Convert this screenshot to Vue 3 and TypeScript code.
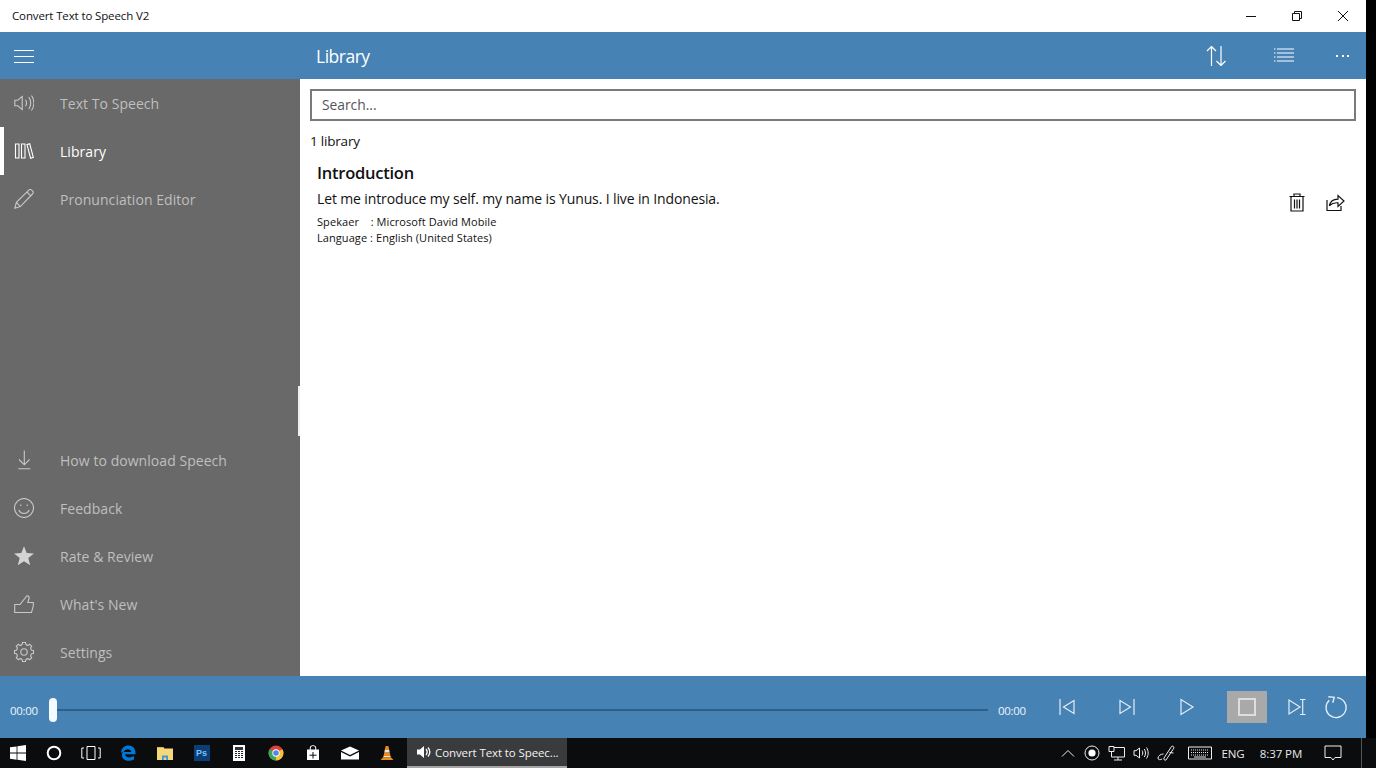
<script setup lang="ts">
interface NavItem { label: string; active?: boolean; icon: string; fill?: boolean }

function gearPath(): string {
  const pts: string[] = []
  const teeth = 8
  const cx = 10, cy = 10
  for (let i = 0; i < teeth; i++) {
    const a = (i / teeth) * Math.PI * 2
    const step = (Math.PI * 2) / teeth
    const seq: [number, number][] = [
      [7.4, a - step * 0.5],
      [7.9, a - step * 0.28],
      [9.6, a - step * 0.2],
      [9.6, a + step * 0.2],
      [7.9, a + step * 0.28],
    ]
    for (const [r, t] of seq) {
      pts.push(`${(cx + r * Math.cos(t)).toFixed(2)} ${(cy + r * Math.sin(t)).toFixed(2)}`)
    }
  }
  return 'M' + pts.join('L') + 'Z M13.2 10a3.2 3.2 0 1 1-6.4 0a3.2 3.2 0 1 1 6.4 0Z'
}

const topNav: NavItem[] = [
  { label: 'Text To Speech', icon: 'M.8 7.2h3L8.2 3.4v13.2L3.8 12.800H.8Z M11.500 6.800c1.300 2 1.300 4.400 0 6.400 M14.800 4c2.400 3.700 2.400 8.300 0 12 M17.500 2.500c3 4.500 3 10.500 0 15' },
  { label: 'Library', active: true, icon: 'M1.500 3h3.500v14H1.500Z M7.500 3H11v14H7.500Z M13 3.600l2.700-.8 3.600 13.600-2.700.8Z' },
  { label: 'Pronunciation Editor', icon: 'M.8 19.200l1.600-5.800L14.800 1.200c1-.9 2.500-.7 3.500.4 1 1 1.100 2.400.2 3.400L6.300 17.600Z M2.400 13.400l3.900 4.200 M13 3l4 4.100' },
]
const bottomNav: NavItem[] = [
  { label: 'How to download Speech', icon: 'M10.300 .5v14 M5 9.500l5.300 5.300 5.300-5.300 M4.300 18.800h12' },
  { label: 'Feedback', icon: 'M19.500 10a9.500 9.500 0 1 1-19 0a9.500 9.500 0 1 1 19 0Z M6.700 6.600v1.500 M13.300 6.600v1.500 M4.800 12c1 2.200 3 3.400 5.200 3.400s4.200-1.200 5.200-3.400' },
  { label: 'Rate & Review', fill: true, icon: 'M10 .3l2.700 6.800 7.200.4-5.600 4.600 1.900 7.100L10 15.200l-6.200 4 1.900-7.100L.1 7.500l7.200-.4Z' },
  { label: "What's New", icon: 'M.7 10.500h5.300L12.800 2c1.500-.4 2.600.5 2.300 2L13.800 8.500h5.500v3.300L17.500 18.500H.7Z' },
  { label: 'Settings', icon: gearPath() },
]
const taskSlots = ['win', 'cortana', 'view', 'edge', 'folder', 'ps', 'calc', 'chrome', 'store', 'mail', 'vlc']
</script>

<template>
  <div class="screen">
    <div class="window">
      <header class="titlebar">
        <span class="title">Convert Text to Speech V2</span>
        <div class="controls">
          <svg class="ctl" viewBox="0 0 12 12"><path d="M1 6.500h10" /></svg>
          <svg class="ctl" viewBox="0 0 12 12"><path d="M1.500 3.500h7v7h-7Z M3.500 3.500v-2h7v7h-2" /></svg>
          <svg class="ctl" viewBox="0 0 12 12"><path d="M1 1l10 10M11 1L1 11" /></svg>
        </div>
      </header>

      <div class="appbar">
        <div class="appbar-left">
          <svg class="burger" viewBox="0 0 20 14"><path d="M0 1.500h20M0 7.500h20M0 13.500h20" /></svg>
        </div>
        <h1 class="page-title">Library</h1>
        <div class="appbar-actions">
          <svg class="act" viewBox="0 0 20 20"><path d="M5.500 20V.5M1 5l4.500-4.500L10 5M15 0v19.500M10.500 15l4.500 4.500 4.500-4.500" /></svg>
          <svg class="act" viewBox="0 0 20 20"><path d="M0 3h1.500M3 3h17M0 7h1.500M3 7h17M0 11h1.500M3 11h17M0 15h1.500M3 15h17" /></svg>
          <div class="dots"><i></i><i></i><i></i></div>
        </div>
      </div>

      <div class="middle">
        <aside class="sidebar">
          <nav class="nav">
            <a v-for="n in topNav" :key="n.label" class="nav-row" :class="{ active: n.active }">
              <svg class="nav-icon" viewBox="0 0 20 20"><path :d="n.icon" :class="{ solid: n.fill }" /></svg>
              <span>{{ n.label }}</span>
            </a>
          </nav>
          <nav class="nav">
            <a v-for="n in bottomNav" :key="n.label" class="nav-row">
              <svg class="nav-icon" viewBox="0 0 20 20"><path :d="n.icon" :class="{ solid: n.fill }" /></svg>
              <span>{{ n.label }}</span>
            </a>
          </nav>
          <div class="grip"></div>
        </aside>

        <main class="content">
          <div class="search">Search...</div>
          <div class="count">1 library</div>
          <article class="entry">
            <div class="entry-text">
              <h2>Introduction</h2>
              <p class="body">Let me introduce my self. my name is Yunus. I live in Indonesia.</p>
              <p class="meta">Spekaer&nbsp;&nbsp;&nbsp; : Microsoft David Mobile</p>
              <p class="meta">Language : English (United States)</p>
            </div>
            <div class="entry-actions">
              <svg class="eact" viewBox="0 0 20 20"><path d="M2.500 4.500h15M7 4.500V2h6v2.500M4 4.500v14.500h12V4.500M7.500 7.500v9M10 7.500v9M12.500 7.500v9" /></svg>
              <svg class="eact" viewBox="0 0 20 20"><path d="M2 8v10.500h14V14M4.500 14c.6-4 3.500-6.800 8.500-6.800V3.500l6 5.500-6 5.500v-3.700c-3.500-.3-6.500.8-8.500 2.700Z" /></svg>
            </div>
          </article>
        </main>
      </div>

      <footer class="player">
        <span class="time first">00:00</span>
        <div class="slider"><div class="thumb"></div><div class="track"></div></div>
        <span class="time last">00:00</span>
        <div class="transport">
          <div class="tbtn"><svg viewBox="0 0 20 20"><path d="M3 2v16M17 3.500v13L6.500 10Z" /></svg></div>
          <div class="tbtn"><svg viewBox="0 0 20 20"><path d="M17 2v16M3 3.500v13L13.500 10Z" /></svg></div>
          <div class="tbtn"><svg viewBox="0 0 20 20"><path d="M4 2.500v15L16 10Z" /></svg></div>
          <div class="tbtn stop"><span class="sq"></span></div>
          <div class="tbtn loop"><svg viewBox="0 0 20 20"><path d="M2 3v14l11-7Z M13 2.500h5.500M13 17.500h5.500M15.700 2.500v15" /></svg></div>
          <div class="tbtn repeat"><svg viewBox="0 0 24 24"><path d="M13 2.600A10 10 0 1 1 5.300 5.200M4.300 1.700L10.300 2.300 8.700 7.700" /></svg></div>
        </div>
      </footer>
    </div>

    <div class="taskbar">
      <div v-for="s in taskSlots" :key="s" class="slot">
        <svg v-if="s === 'win'" class="t16" viewBox="0 0 16 16"><path class="w" d="M0 2.300l6.600-.9v6.200H0ZM7.400 1.300L16 0v7.600H7.400ZM0 8.400h6.600v6.300L0 13.700ZM7.400 8.400H16V16l-8.600-1.200Z" /></svg>
        <svg v-else-if="s === 'cortana'" class="t16" viewBox="0 0 16 16"><circle cx="8" cy="8" r="6.300" fill="none" stroke="#fff" stroke-width="2" /></svg>
        <svg v-else-if="s === 'view'" class="t20" viewBox="0 0 20 16"><path d="M6 1.500h8v13H6ZM3 3H.8v10H3M17 3h2.200v10H17" fill="none" stroke="#fff" stroke-width="1" /></svg>
        <svg v-else-if="s === 'edge'" class="t16" viewBox="0 0 16 16"><path d="M1 7.600C1.500 3 4.800.5 8.500.5c4.500 0 7 3 7 7.500v1.300H5c.3 3 4.500 4.300 9 1.700v3.500c-5.500 2.800-12 1-12-4.500 0-2.300 1.300-3.900 3-4.900-.5.700-.8 1.300-1 2h7.200c0-3.400-5.500-4.500-9.200.5Z" fill="#0078d7" /></svg>
        <svg v-else-if="s === 'folder'" class="t18" viewBox="0 0 18 16"><path d="M1 2h6l1.500 1.500H17V15H1Z" fill="#f6d77a" /><path d="M1 2h6l1 1H1Z" fill="#e6b54a" /><path d="M6 15v-4.500h6V15h-1.800v-2.500H7.800V15Z" fill="#3d9bd6" /></svg>
        <div v-else-if="s === 'ps'" class="ps">Ps</div>
        <div v-else-if="s === 'calc'" class="calc">
          <span class="calc-screen"></span>
          <span v-for="k in 12" :key="k" class="calc-key"></span>
        </div>
        <svg v-else-if="s === 'chrome'" class="t16" viewBox="0 0 16 16">
          <circle cx="8" cy="8" r="7.500" fill="#d8443a" />
          <path d="M8 8L1.500 4.300A7.500 7.500 0 0 0 8 15.500Z" fill="#3aa757" />
          <path d="M8 8v7.500A7.500 7.500 0 0 0 14.500 4.300Z" fill="#f5c33b" />
          <circle cx="8" cy="8" r="3.700" fill="#fff" /><circle cx="8" cy="8" r="2.800" fill="#4a88ee" />
        </svg>
        <svg v-else-if="s === 'store'" class="t16" viewBox="0 0 16 16"><path fill-rule="evenodd" d="M2 4.500h2.800V2.800a3.200 2.600 0 0 1 6.400 0v1.700H14V15H2ZM5.800 4.500h4.400V2.800a2.200 1.700 0 0 0-4.400 0Z" fill="#fff" /><path d="M4.500 10.200h7M8 7v6.500" stroke="#0b0c0d" stroke-width="1" fill="none" /></svg>
        <svg v-else-if="s === 'mail'" class="t18" viewBox="0 0 18 16"><path d="M0 5.500l9-4 9 4-9 4.500ZM0 7l9 4.500L18 7v7.500H0Z" fill="#fff" /></svg>
        <svg v-else class="t16" viewBox="0 0 16 16"><path d="M6.700 1h2.600l1 4H5.700Z M5.300 7.500h5.400l.8 3.500h-7Z" fill="#f08a14" /><path d="M5.700 5h4.600l.4 2.500H5.300ZM4.500 11h7l.4 1.600H4.100Z" fill="#e8e4de" /><path d="M3.800 12.500h8.400l2.300 2.500H1.500Z" fill="#f08a14" /></svg>
      </div>

      <div class="app-tab">
        <svg class="tab-spk" viewBox="0 0 14 14"><path d="M0 4.500h3L7 1v12L3 9.500H0Z" fill="#fff" /><path d="M9 4c1.400 1.800 1.400 4.200 0 6M11 2.500c2.300 2.800 2.300 6.200 0 9" fill="none" stroke="#fff" stroke-width="1.300" /></svg>
        <span>Convert Text to Speec...</span>
      </div>

      <div class="tray">
        <div class="ti w24"><svg class="i14" viewBox="0 0 14 14"><path d="M1 10.500L7 4.500l6 6" /></svg></div>
        <div class="ti w24"><svg class="i16" viewBox="0 0 16 16"><circle cx="8" cy="8" r="7" /><circle class="f" cx="8" cy="8" r="3.600" /></svg></div>
        <div class="ti w25"><svg class="i18" viewBox="0 0 18 16"><path d="M6 2.500h10.500v9.500H3.500V7M10 12v3M6 15h8M1 1.500h5v5H1Z" /></svg></div>
        <div class="ti w23"><svg class="i16" viewBox="0 0 16 16"><path d="M1 5.700h2L6.500 3v10L3 10.300H1ZM9 5.500c1 1.500 1 3.500 0 5M11.300 4c1.600 2.500 1.600 5.500 0 8M13.500 2.500c2.200 3.500 2.200 7.500 0 11" /></svg></div>
        <div class="ti w30"><svg class="i20" viewBox="0 0 20 16"><path d="M7 13L14.500 1.500c1-1 3 .2 2.300 1.700L9 15c-1 .8-2.800-.5-2-2ZM12.500 7.500l4 .5M6.500 9C3.500 9 1 11 1 13c0 2 2.500 2 4 1" /></svg></div>
        <div class="ti w36"><svg class="kbd" viewBox="0 0 24 14"><path d="M.5 1h23v12H.5Z" /><path class="dash" d="M3 4h18M3 6.500h18M3 9h18" /><path d="M6 11h12" /></svg></div>
        <div class="ti w30 tt">ENG</div>
        <div class="ti w66 tt">8:37 PM</div>
        <div class="ti w38"><svg class="i18" viewBox="0 0 18 16"><path d="M1 1h16v11.500h-6L9 15l-2-2.500H1Z" /></svg></div>
        <div class="tray-end"></div>
      </div>
    </div>
  </div>
</template>

<style>
html, body { margin: 0; background: #000; overflow: hidden; }
</style>

<style scoped>
* { box-sizing: border-box; }
.screen {
  width: 1376px; height: 768px; background: #000; display: flex; flex-direction: column;
  font-family: "Open Sans", "Noto Sans", sans-serif; overflow: hidden;
}
.window { width: 1366px; height: 738px; background: #fff; display: flex; flex-direction: column; flex: none; }

.titlebar { height: 32px; flex: none; display: flex; align-items: center; padding-left: 12px; background: #fff; color: #111; }
.title { font-size: 11.500px; letter-spacing: -0.13px; padding-bottom: 2px; }
.controls { margin-left: auto; display: flex; }
.ctl { width: 46px; height: 12px; padding: 0; overflow: visible; fill: none; stroke: #111; stroke-width: 1; }

.appbar { height: 47px; flex: none; background: #4682b4; display: flex; align-items: center; color: #fff; }
.appbar-left { width: 316px; padding-left: 14px; display: flex; }
.burger { width: 20px; height: 14px; fill: none; stroke: #fff; stroke-width: 1; }
.page-title { margin: 0; font-size: 17.500px; font-weight: 400; letter-spacing: -0.5px; }
.appbar-actions { margin-left: auto; display: flex; align-items: center; padding-right: 16px; gap: 48px; }
.act { width: 20px; height: 20px; fill: none; stroke: #fff; stroke-width: 1.200; }
.dots { display: flex; gap: 3.500px; width: 14px; margin-left: -6px; }
.dots i { width: 2px; height: 2px; background: #fff; flex: none; }

.middle { flex: 1; min-height: 0; display: flex; }
.sidebar {
  width: 300px; flex: none; background: #696969; position: relative;
  display: flex; flex-direction: column; justify-content: space-between;
}
.nav { display: flex; flex-direction: column; }
.nav-row {
  height: 48px; display: flex; align-items: center; gap: 26px; padding-left: 14px;
  color: #bfbfbf; font-size: 14px; letter-spacing: 0.05px; position: relative;
}
.nav-row.active { color: #fff; }
.nav-row.active::before { content: ""; position: absolute; left: 0; top: 0; bottom: 0; width: 4px; background: #fff; }
.nav-icon { width: 20px; height: 20px; flex: none; fill: none; stroke: #c9c9c9; stroke-width: 1.100; }
.nav-row.active .nav-icon { stroke: #fff; }
.nav-icon .solid { fill: #d4d4d4; stroke: none; }
.grip { position: absolute; right: 0; top: 307px; width: 2px; height: 50px; background: #f0f0f0; }

.content { flex: 1; min-width: 0; background: #fff; padding: 10px 10px 0; color: #111; }
.search {
  height: 32px; border: 2px solid #7a7a7a; padding-left: 10px; font-size: 13.800px;
  line-height: 27px; color: #555;
}
.count { font-size: 13.500px; margin-top: 11px; line-height: 18px; letter-spacing: -0.2px; }
.entry { display: flex; padding: 12px 11px 0 7px; }
.entry-text { flex: 1; }
.entry h2 { margin: 0; font-size: 16.500px; font-weight: 600; line-height: 22px; letter-spacing: -0.25px; }
.body { margin: 5px 0 0; font-size: 14px; line-height: 20px; letter-spacing: -0.13px; }
.meta { margin: 0; font-size: 11px; line-height: 16px; letter-spacing: 0.07px; }
.meta:nth-of-type(2) { margin-top: 5px; }
.entry-actions { display: flex; gap: 18px; padding-top: 30px; }
.eact { width: 20px; height: 20px; fill: none; stroke: #111; stroke-width: 1.200; }

.player { height: 62px; flex: none; background: #4682b4; display: flex; align-items: center; color: #eef5fb; padding-left: 10px; position: relative; }
.time { font-size: 11.500px; letter-spacing: -0.3px; width: 29px; flex: none; padding-top: 6px; white-space: nowrap; }
.slider { width: 939px; margin-left: 10px; display: flex; align-items: center; flex: none; padding-top: 6px; }
.thumb { width: 8px; height: 24px; border-radius: 4px; background: #f4faff; flex: none; }
.track { flex: 1; height: 2px; background: #2f5f88; }
.last { margin-left: 10px; }
.transport { display: flex; align-items: center; margin-left: 10px; padding-bottom: 1px; }
.tbtn { width: 60px; height: 32px; display: flex; align-items: center; justify-content: center; }
.tbtn svg { width: 20px; height: 20px; fill: none; stroke: #e3edf6; stroke-width: 1.200; }
.stop { width: 40px; background: #a9a9a9; margin: 0 10px; }
.sq { width: 18px; height: 18px; border: 2px solid #dedede; }
.loop { width: 40px; }
.repeat { width: 28px; margin-left: 5px; }
.tbtn.repeat svg { width: 24px; height: 24px; stroke-width: 1.400; }

.taskbar { height: 30px; flex: none; background: #0b0c0d; display: flex; align-items: stretch; color: #fff; }
.slot { width: 37px; flex: none; display: flex; align-items: center; justify-content: center; }
.slot:first-child { width: 35px; }
.t16 { width: 16px; height: 16px; }
.t18 { width: 18px; height: 16px; }
.t20 { width: 20px; height: 16px; }
.w { fill: #fff; }
.ps {
  width: 16px; height: 16px; background: #0b3d78; color: #7cc3f2; font-size: 9px; font-weight: 700;
  line-height: 16px; text-align: center; font-family: "Liberation Sans", sans-serif;
}
.calc { width: 12px; height: 16px; background: #fff; display: grid; grid-template-columns: repeat(3, 2px); gap: 1px 1px; padding: 2px 2px; align-content: start; justify-content: center; }
.calc-screen { grid-column: 1 / -1; height: 3px; background: #333; }
.calc-key { width: 2px; height: 1px; background: #222; }
.app-tab {
  width: 160px; margin-left: 2px; background: #3a3b3c; border-bottom: 2px solid #a5a5a5;
  display: flex; align-items: center; padding-left: 10px; gap: 4px; font-size: 11.500px; letter-spacing: -0.1px; white-space: nowrap; color: #f2f2f2;
}
.tab-spk { width: 14px; height: 14px; flex: none; }
.tray { margin-left: auto; display: flex; align-items: stretch; color: #e8e8e8; }
.ti { display: flex; align-items: center; justify-content: center; flex: none; }
.ti svg { fill: none; stroke: #eee; stroke-width: 1; }
.ti .f { fill: #fff; stroke: none; }
.ti .dash { stroke-dasharray: 1 1; }
.w23 { width: 23px; } .w24 { width: 24px; } .w25 { width: 25px; } .w30 { width: 30px; } .w36 { width: 36px; } .w38 { width: 38px; } .w66 { width: 66px; }
.i14 { width: 14px; height: 14px; } .i16 { width: 16px; height: 16px; } .i18 { width: 18px; height: 16px; } .i20 { width: 20px; height: 16px; }
.kbd { width: 24px; height: 14px; }
.tt { font-size: 11.500px; letter-spacing: -0.1px; white-space: nowrap; }
.tray-end { width: 24px; flex: none; position: relative; }
.tray-end::before { content: ""; position: absolute; left: 9px; top: 0; bottom: 0; width: 1px; background: #555; }
</style>
